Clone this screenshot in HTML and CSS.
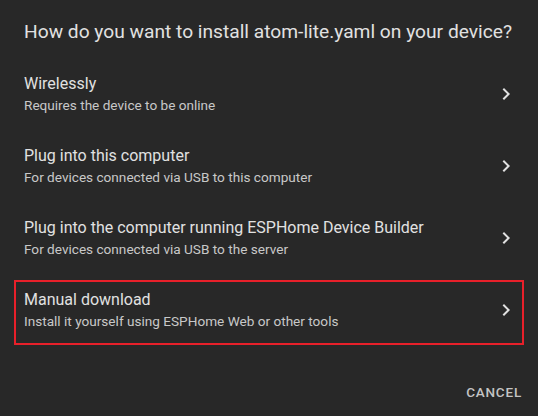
FILE: index.html
```html
<!DOCTYPE html>
<html lang="en">
<head>
    <meta charset="UTF-8">
    <meta name="viewport" content="width=device-width, initial-scale=1.0">
    <title>Install</title>
    <link rel="stylesheet" href="styles.css">
</head>
<body>
    <div class="dialog">
        <h2 class="dialog-title">How do you want to install atom-lite.yaml on your device?</h2>

        <div class="option-list">
            <div class="option">
                <div class="option-text">
                    <span class="option-title">Wirelessly</span>
                    <span class="option-sub">Requires the device to be online</span>
                </div>
                <svg class="chevron" viewBox="0 0 24 24"><path d="M8.59,16.58L13.17,12L8.59,7.41L10,6L16,12L10,18L8.59,16.58Z"/></svg>
            </div>
            <div class="option">
                <div class="option-text">
                    <span class="option-title">Plug into this computer</span>
                    <span class="option-sub">For devices connected via USB to this computer</span>
                </div>
                <svg class="chevron" viewBox="0 0 24 24"><path d="M8.59,16.58L13.17,12L8.59,7.41L10,6L16,12L10,18L8.59,16.58Z"/></svg>
            </div>
            <div class="option">
                <div class="option-text">
                    <span class="option-title">Plug into the computer running ESPHome Device Builder</span>
                    <span class="option-sub">For devices connected via USB to the server</span>
                </div>
                <svg class="chevron" viewBox="0 0 24 24"><path d="M8.59,16.58L13.17,12L8.59,7.41L10,6L16,12L10,18L8.59,16.58Z"/></svg>
            </div>
            <div class="option highlight">
                <div class="option-text">
                    <span class="option-title">Manual download</span>
                    <span class="option-sub">Install it yourself using ESPHome Web or other tools</span>
                </div>
                <svg class="chevron" viewBox="0 0 24 24"><path d="M8.59,16.58L13.17,12L8.59,7.41L10,6L16,12L10,18L8.59,16.58Z"/></svg>
            </div>
        </div>

        <div class="dialog-actions">
            <button class="text-button">Cancel</button>
        </div>
    </div>
</body>
</html>
```

FILE: styles.css
```css
body {
    margin: 0;
    background: #282828;
    font-family: Roboto, 'Liberation Sans', sans-serif;
    color: #e1e1e1;
}
.dialog {
    width: 538px;
    height: 416px;
    overflow: hidden;
}
.dialog-title {
    margin: 0;
    padding: 16px 24px 10px;
    font-size: 19.2px;
    font-weight: 400;
    line-height: 32px;
    white-space: nowrap;
    color: #e1e1e1;
}
.option {
    position: relative;
    height: 72px;
    display: flex;
    align-items: center;
    padding: 0 20px 0 24px;
}
.option-text {
    flex: 1;
    display: flex;
    flex-direction: column;
}
.option-title {
    font-size: 16px;
    font-weight: 400;
    line-height: 20px;
    color: #e1e1e1;
}
.option-sub {
    margin-top: 1px;
    font-size: 13.6px;
    line-height: 20px;
    color: #c8c8c8;
}
.chevron {
    width: 24px;
    height: 24px;
    fill: #e1e1e1;
}
.highlight::after {
    content: '';
    position: absolute;
    top: 6px;
    left: 14px;
    right: 14px;
    bottom: 1px;
    border: 2px solid #e8202a;
}
.dialog-actions {
    display: flex;
    justify-content: flex-end;
    padding: 28px 8px 0;
}
.text-button {
    height: 36px;
    padding: 0 8px;
    border: none;
    background: none;
    font-family: inherit;
    font-size: 13.5px;
    font-weight: 500;
    letter-spacing: 0.8px;
    text-transform: uppercase;
    color: #c4c4c4;
}
```
